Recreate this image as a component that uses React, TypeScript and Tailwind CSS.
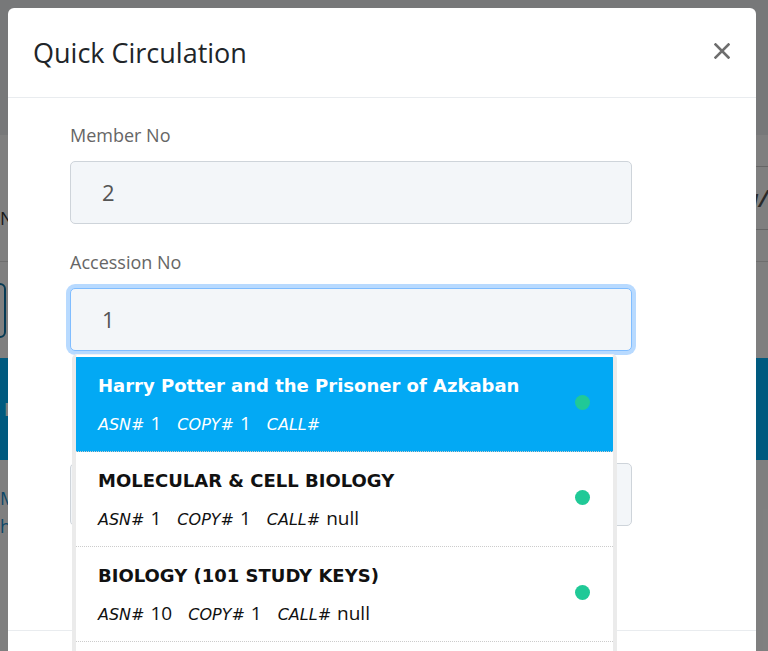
import React from 'react';

const books = [
  { title: 'Harry Potter and the Prisoner of Azkaban', asn: '1', copy: '1', call: '', active: true },
  { title: 'MOLECULAR & CELL BIOLOGY', asn: '1', copy: '1', call: 'null' },
  { title: 'BIOLOGY (101 STUDY KEYS)', asn: '10', copy: '1', call: 'null' },
  { title: 'GENERAL BIOLOGY', asn: '11', copy: '1', call: 'null' },
];

function BackgroundPage() {
  return (
    <div className="flex flex-col h-full bg-white font-['Open_Sans',sans-serif]">
      <div className="h-[135px] bg-[#eef0f2]" />
      <div className="h-[127px] border-b border-[#dddddd] flex items-center justify-between">
        <span className="text-[#333] text-lg mt-[40px]">Name</span>
        <div className="h-[64px] border-y border-[#cccccc] flex items-center">
          <span className="text-[#555] text-2xl font-semibold italic">n/a/</span>
        </div>
      </div>
      <div className="h-[96px] flex items-center">
        <div className="w-[40px] h-[55px] -ml-[34px] border-2 border-[#0a74a8] rounded-md" />
      </div>
      <div className="h-[102px] bg-[#00b4ff] flex items-center px-1">
        <span className="text-white font-bold text-lg">Member</span>
      </div>
      <div className="flex flex-col pt-6 text-[#1a8fd0] text-lg">
        <span>Member</span>
        <span>history</span>
      </div>
    </div>
  );
}

function CloseIcon() {
  return (
    <svg width="16" height="16" viewBox="0 0 16 16" fill="none">
      <path d="M1.5 1.5L14.5 14.5M14.5 1.5L1.5 14.5" stroke="#6e6e6e" strokeWidth="2.6" strokeLinecap="square" />
    </svg>
  );
}

function BookItem({ book }: { book: (typeof books)[number] }) {
  return (
    <div
      className={
        'h-[95px] flex items-center justify-between pl-[22px] pr-[23px] border-b border-dotted border-[#cccccc] ' +
        (book.active ? 'bg-[#03a9f4] text-white' : 'bg-white text-[#111]')
      }
    >
      <div className="flex flex-col mt-[2px]">
        <div className="font-['DejaVu_Sans',sans-serif] font-bold text-[18px] leading-6">{book.title}</div>
        <div className="flex items-baseline mt-3 h-[26px] leading-[26px]">
          <span className="font-['DejaVu_Sans',sans-serif] italic text-[16px]">ASN#</span>
          <span className="ml-1.5 mr-4 text-[19px]">{book.asn}</span>
          <span className="font-['DejaVu_Sans',sans-serif] italic text-[16px]">COPY#</span>
          <span className="ml-1.5 mr-4 text-[19px]">{book.copy}</span>
          <span className="font-['DejaVu_Sans',sans-serif] italic text-[16px]">CALL#</span>
          <span className="ml-1.5 text-[19px]">{book.call}</span>
        </div>
      </div>
      <div className="w-[15px] h-[15px] rounded-full bg-[#20c997] -mt-[3px]" />
    </div>
  );
}

export default function App() {
  return (
    <div className="relative h-[651px] w-full overflow-hidden">
      <BackgroundPage />
      <div className="absolute inset-0 bg-black/50" />

      <div className="absolute left-2 top-2 w-[748px] bg-white rounded-md font-['Open_Sans',sans-serif]">
        {/* Header */}
        <div className="flex items-center justify-between pl-[25px] pr-[26px] pt-[29px] pb-[28px] border-b border-[#e9ecef]">
          <h5 className="text-[27px] leading-8 text-[#212529]">Quick Circulation</h5>
          <button className="mt-[-4px]">
            <CloseIcon />
          </button>
        </div>

        {/* Body */}
        <div className="pl-[62px] pr-[124px] pt-[25px] pb-[104px]">
          <label className="block text-[18px] leading-6 text-[#666]">Member No</label>
          <div className="mt-[14px] h-[63px] flex items-center pl-[31px] bg-[#f3f6f9] border border-[#ced4da] rounded-[5px] text-[22px] text-[#555]">
            2
          </div>

          <div className="relative mt-[26px]">
            <label className="block text-[18px] leading-6 text-[#666]">Accession No</label>
            <div className="mt-[14px] h-[63px] flex items-center pl-[31px] bg-[#f3f6f9] border border-[#80bdff] rounded-[5px] shadow-[0_0_0_4px_rgba(0,123,255,0.28)] text-[22px] text-[#555]">
              1
            </div>

            {/* Suggestions dropdown */}
            <div className="absolute z-10 left-[2px] top-[104px] w-[545px] h-[300px] overflow-hidden bg-white border-x-4 border-t border-[#ebebeb] border-t-[#f2f2f2] rounded-t-[5px] pt-[2px]">
              {books.map((b) => (
                <BookItem key={b.title} book={b} />
              ))}
            </div>
          </div>

          {/* field hidden under the dropdown */}
          <div className="mt-[112px] h-[63px] bg-[#f3f6f9] border border-[#ced4da] rounded-[5px]" />
        </div>

        {/* Footer */}
        <div className="h-[70px] border-t border-[#e9ecef]" />
      </div>
    </div>
  );
}
